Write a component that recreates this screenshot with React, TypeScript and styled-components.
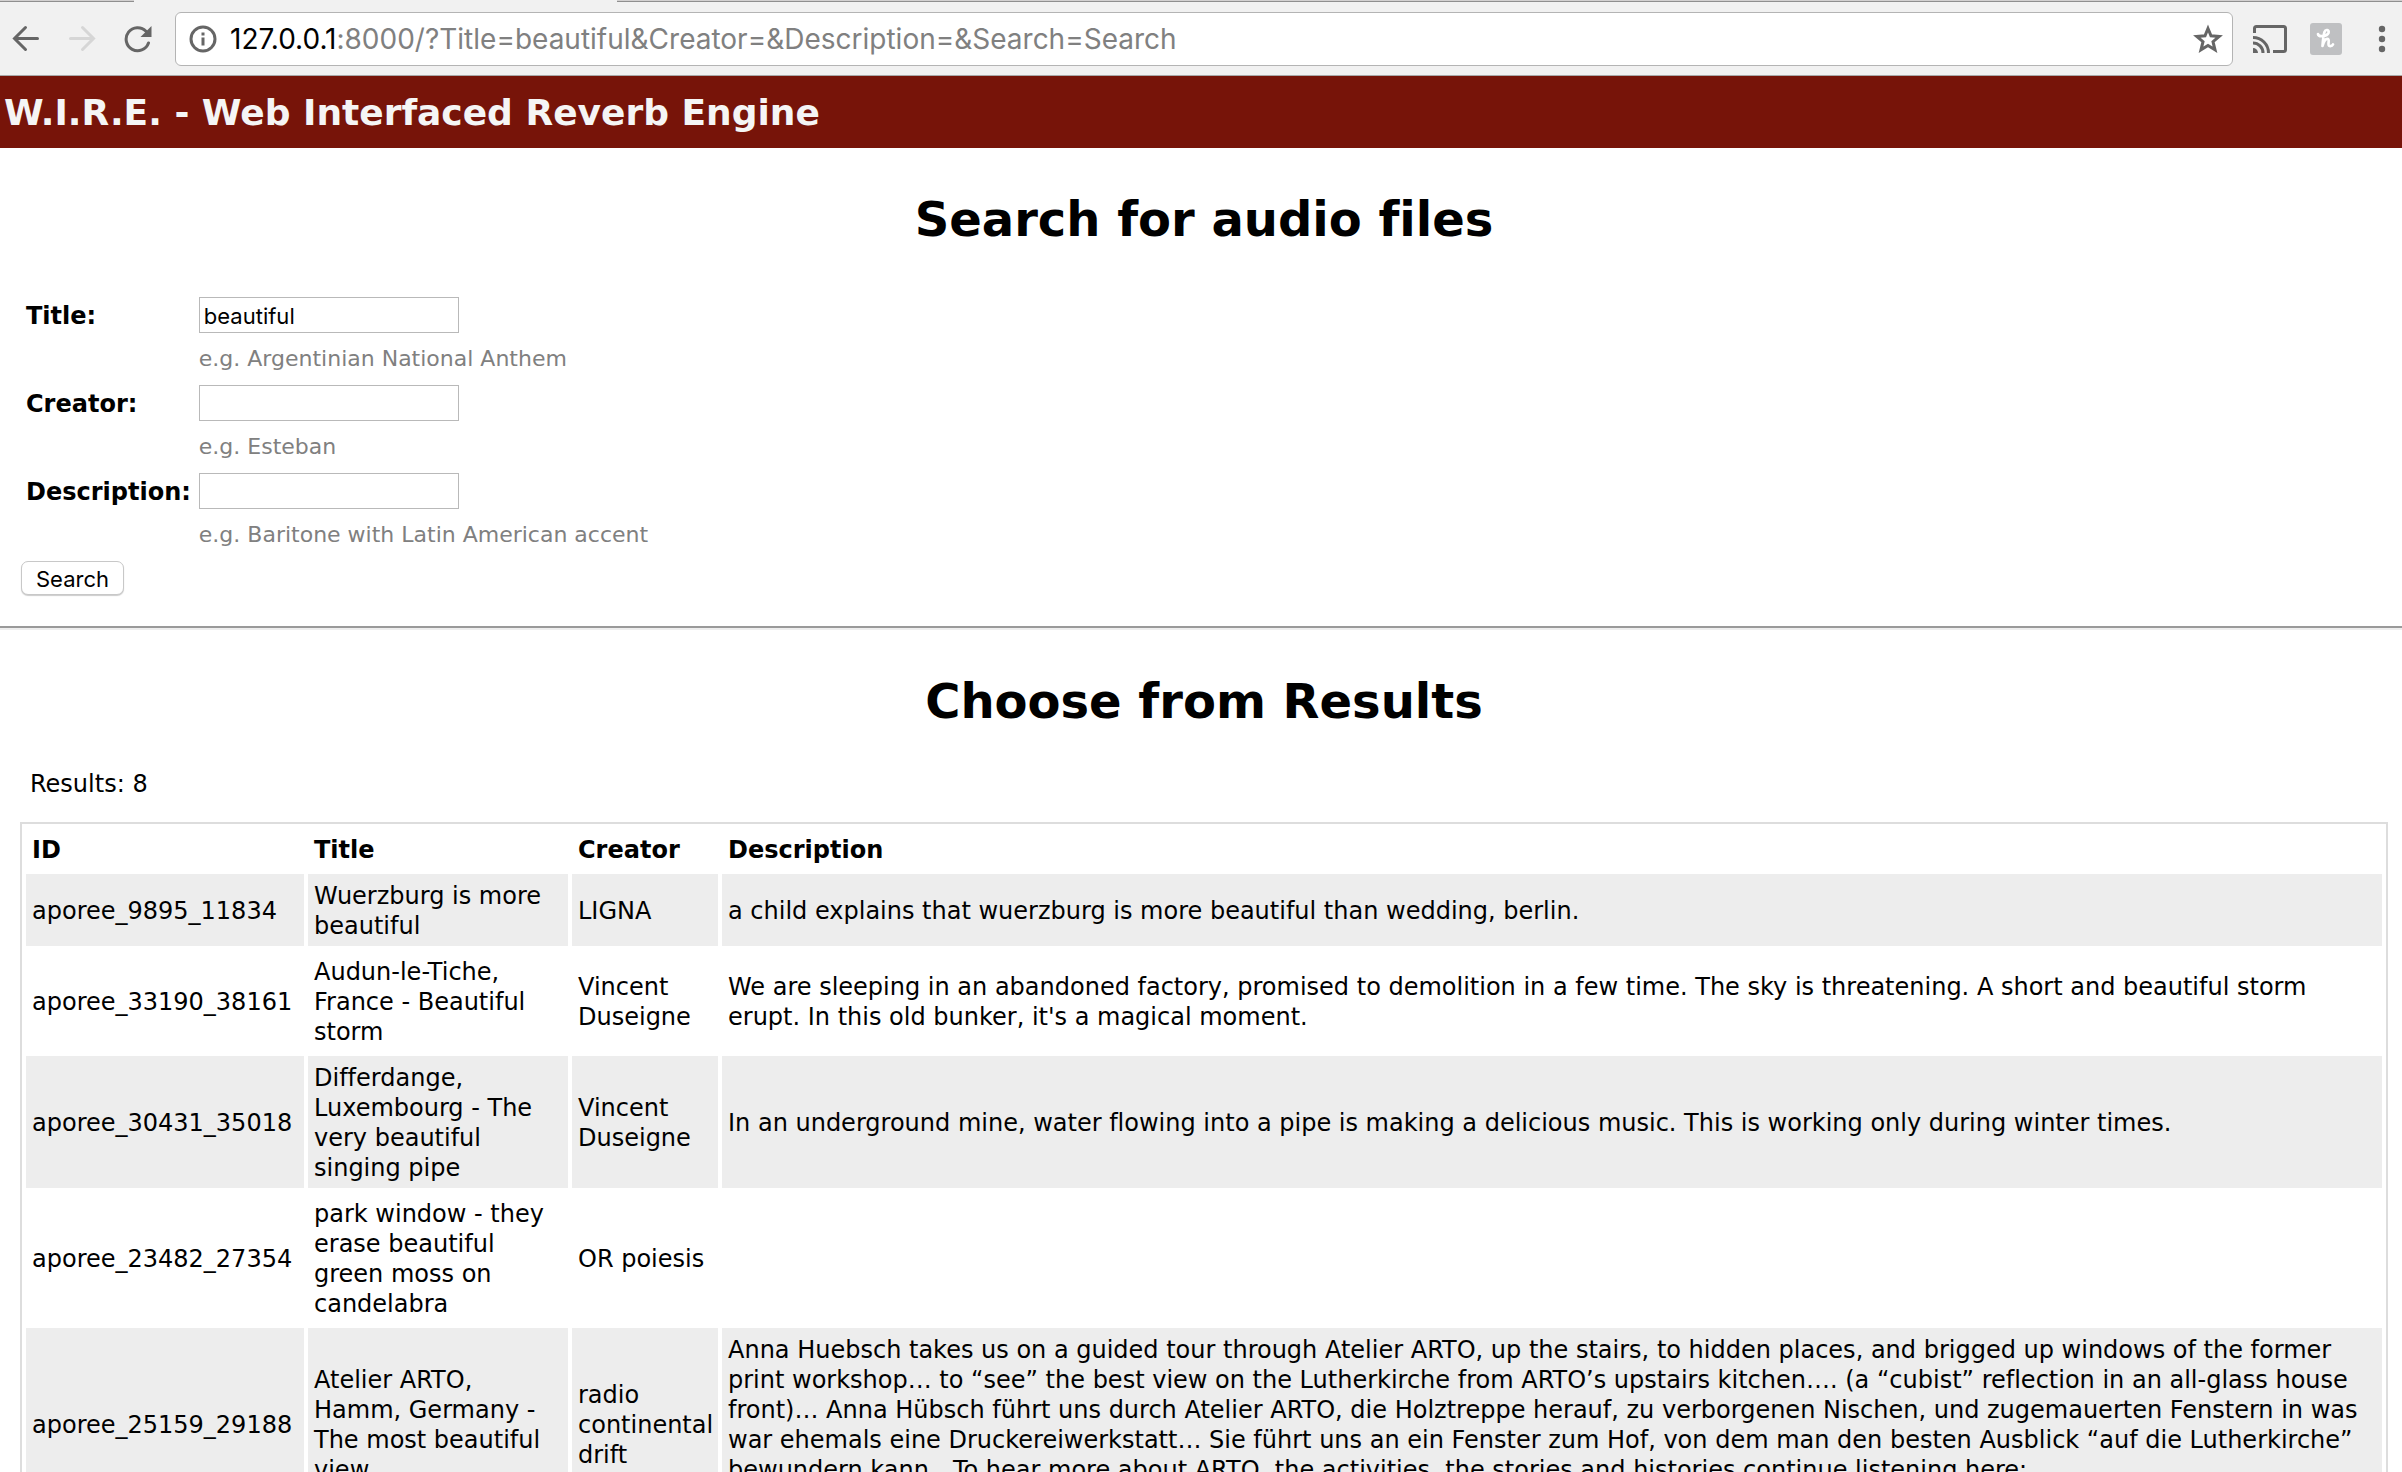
import React from "react";
import styled, { createGlobalStyle } from "styled-components";

const GlobalStyle = createGlobalStyle`
  *, *::before, *::after { box-sizing: border-box; }
  body {
    margin: 0;
    background: #fff;
    color: #000;
    font-family: Verdana, "DejaVu Sans", sans-serif;
    font-size: 24px;
    line-height: 30px;
    font-variant-ligatures: none;
  }
`;

const uiFont = `Inter, Roboto, sans-serif`;

const Window = styled.div`
  display: flex;
  flex-direction: column;
  height: 100vh;
  overflow: hidden;
`;

const TabStrip = styled.div`
  display: flex;
  height: 2px;
  flex: none;
  background: #f1f1f1;
`;

const TabEdge = styled.div<{ $grow?: boolean }>`
  height: 2px;
  width: 134px;
  flex: ${(p) => (p.$grow ? "1" : "none")};
  background: #d2d0d0;
  border-bottom: 1px solid #8f8f8f;
`;

const TabGap = styled.div`
  width: 483px;
  flex: none;
`;

const Toolbar = styled.header`
  display: flex;
  align-items: center;
  flex: none;
  height: 74px;
  padding: 0 2px 0 8px;
  background: #f1f1f1;
  border-bottom: 1px solid #a9a9a9;
`;

const IconButton = styled.button<{ $dim?: boolean }>`
  display: flex;
  align-items: center;
  justify-content: center;
  flex: none;
  width: 36px;
  height: 36px;
  padding: 0;
  border: 0;
  background: none;
  color: ${(p) => (p.$dim ? "#d6d6d6" : "#666")};
  svg { display: block; }
`;

const Navigation = styled.nav`
  display: flex;
  gap: 20px;
  margin-right: 19px;
`;

const AddressBar = styled.div`
  display: flex;
  align-items: center;
  flex: 1;
  height: 54px;
  padding: 0 6px 0 9px;
  background: #fff;
  border: 1px solid #b4b4b4;
  border-radius: 6px;
`;

const Url = styled.span`
  flex: 1;
  padding: 1px 0 0 9px;
  font-family: ${uiFont};
  font-size: 28px;
  line-height: 34px;
  color: #808080;
  white-space: nowrap;
`;

const Host = styled.span`
  color: #000;
`;

const Extensions = styled.div`
  display: flex;
  align-items: center;
  gap: 20px;
  margin-left: 19px;
`;

const Page = styled.div`
  flex: 1;
  overflow: hidden;
`;

const Banner = styled.div`
  padding: 15px 4px 13px;
  background: #771409;
  color: #f5f5f5;
  font-size: 36px;
  line-height: 44px;
  font-weight: bold;
`;

const Section = styled.section`
  padding: 0 14px 0 20px;
`;

const Heading = styled.h1`
  margin: 0;
  padding-top: 41px;
  font-size: 48px;
  line-height: 60px;
  text-align: center;
`;

const Form = styled.form`
  padding: 48px 1px 31px;
`;

const Fields = styled.div`
  display: grid;
  grid-template-columns: max-content 1fr;
  column-gap: 8px;
  padding-left: 5px;
`;

const Label = styled.label`
  padding-top: 4px;
  font-weight: bold;
`;

const Field = styled.div`
  display: flex;
  flex-direction: column;
  align-items: flex-start;
  height: 88px;
`;

const TextInput = styled.input`
  width: 260px;
  height: 36px;
  padding: 2px 4px 0;
  border: 1px solid #b9b9b9;
  border-radius: 0;
  background: #fff;
  color: #000;
  font-family: ${uiFont};
  font-size: 22px;
`;

const Hint = styled.span`
  padding-top: 11px;
  font-size: 22px;
  line-height: 30px;
  color: #808080;
`;

const SubmitButton = styled.button`
  display: block;
  height: 34px;
  padding: 1px 14px 0;
  border: 1px solid #c8c8c8;
  border-radius: 7px;
  background: #fff;
  box-shadow: 0 1px 1px rgba(0, 0, 0, 0.2);
  color: #000;
  font-family: ${uiFont};
  font-size: 22px;
  line-height: 30px;
`;

const Divider = styled.hr`
  height: 4px;
  margin: 0;
  border: 0;
  border-top: 2px solid #9a9a9a;
  border-bottom: 2px solid #eee;
`;

const ResultCount = styled.p`
  margin: 0;
  padding: 38px 10px 23px;
`;

const Table = styled.table`
  width: 100%;
  table-layout: fixed;
  border: 2px solid #ddd;
  border-collapse: separate;
  border-spacing: 4px;
  font-size: 24px;
`;

const Column = styled.col<{ $width?: number }>`
  width: ${(p) => (p.$width ? `${p.$width}px` : "auto")};
`;

const HeaderCell = styled.th`
  padding: 7px 6px 5px;
  text-align: left;
`;

const Row = styled.tr`
  &:nth-child(odd) td { background: #ededed; }
`;

const Cell = styled.td<{ $top?: boolean }>`
  padding: 7px 6px 5px;
  vertical-align: ${(p) => (p.$top ? "top" : "middle")};
  height: ${(p) => (p.$top ? "192px" : "auto")};
`;

const fields = [
  { id: "title", label: "Title:", value: "beautiful", hint: "e.g. Argentinian National Anthem" },
  { id: "creator", label: "Creator:", value: "", hint: "e.g. Esteban" },
  { id: "description", label: "Description:", value: "", hint: "e.g. Baritone with Latin American accent" },
];

type Result = { id: string; title: string; creator: string; description: string; long?: boolean };

const results: Result[] = [
  {
    id: "aporee_9895_11834",
    title: "Wuerzburg is more beautiful",
    creator: "LIGNA",
    description: "a child explains that wuerzburg is more beautiful than wedding, berlin.",
  },
  {
    id: "aporee_33190_38161",
    title: "Audun-le-Tiche, France - Beautiful storm",
    creator: "Vincent Duseigne",
    description:
      "We are sleeping in an abandoned factory, promised to demolition in a few time. The sky is threatening. A short and beautiful storm erupt. In this old bunker, it's a magical moment.",
  },
  {
    id: "aporee_30431_35018",
    title: "Differdange, Luxembourg - The very beautiful singing pipe",
    creator: "Vincent Duseigne",
    description:
      "In an underground mine, water flowing into a pipe is making a delicious music. This is working only during winter times.",
  },
  {
    id: "aporee_23482_27354",
    title: "park window - they erase beautiful green moss on candelabra",
    creator: "OR poiesis",
    description: "",
  },
  {
    id: "aporee_25159_29188",
    title: "Atelier ARTO, Hamm, Germany - The most beautiful view",
    creator: "radio continental drift",
    description:
      "Anna Huebsch takes us on a guided tour through Atelier ARTO, up the stairs, to hidden places, and brigged up windows of the former print workshop… to “see” the best view on the Lutherkirche from ARTO’s upstairs kitchen…. (a “cubist” reflection in an all-glass house front)… Anna Hübsch führt uns durch Atelier ARTO, die Holztreppe herauf, zu verborgenen Nischen, und zugemauerten Fenstern in was war ehemals eine Druckereiwerkstatt… Sie führt uns an ein Fenster zum Hof, von dem man den besten Ausblick “auf die Lutherkirche” bewundern kann…To hear more about ARTO, the activities, the stories and histories continue listening here:",
    long: true,
  },
];

const BackIcon = () => (
  <svg width="28" height="28" viewBox="0 0 28 28" fill="none" stroke="currentColor" strokeWidth="3" strokeLinecap="round">
    <path d="M25.500 13.500H3M13.500 2.500L2.500 13.500L13.500 24.500" />
  </svg>
);

const ForwardIcon = () => (
  <svg width="28" height="28" viewBox="0 0 28 28" fill="none" stroke="currentColor" strokeWidth="3" strokeLinecap="round">
    <path d="M2.500 13.500H25M14.500 2.500L25.500 13.500L14.500 24.500" />
  </svg>
);

const ReloadIcon = () => (
  <svg width="28" height="28" viewBox="0 0 28 28">
    <path
      d="M24.500 18A11.500 11.500 0 1 1 22 6.300"
      fill="none"
      stroke="currentColor"
      strokeWidth="3"
      strokeLinecap="round"
    />
    <path d="M27.500 1V12H16.500Z" fill="currentColor" />
  </svg>
);

const InfoIcon = () => (
  <svg width="28" height="28" viewBox="0 0 28 28">
    <circle cx="14" cy="14" r="12" fill="none" stroke="currentColor" strokeWidth="3" />
    <path d="M12.500 12.500h3v8h-3zM12.500 7.500h3v3h-3z" fill="currentColor" />
  </svg>
);

const StarIcon = () => (
  <svg width="30" height="30" viewBox="0 0 30 30" fill="none" stroke="currentColor" strokeWidth="3">
    <path d="M15 4.500L18 11.800L26.200 12.400L20 17.700L22 25.800L15 21.400L8 25.800L10 17.700L3.800 12.400L12 11.800Z" />
  </svg>
);

const CastIcon = () => (
  <svg width="36" height="30" viewBox="0 0 36 30" fill="none" stroke="currentColor" strokeWidth="3">
    <path d="M2.500 9V4.500Q2.500 2.500 4.500 2.500H31.500Q33.500 2.500 33.500 4.500V25.500Q33.500 27.500 31.500 27.500H21" />
    <path d="M1 13.500A15.500 15.500 0 0 1 16.500 29M1 19A10 10 0 0 1 11 29" />
    <path d="M1 24A5 5 0 0 1 6 29H1Z" fill="currentColor" stroke="none" />
  </svg>
);

const HoneyIcon = () => (
  <svg width="32" height="32" viewBox="0 0 32 32" fill="none">
    <rect width="32" height="32" rx="3" fill="#bfc0c2" />
    <path
      d="M8 11C8.500 14.500 17 13.500 18.500 10C19.500 6.500 15.500 6 14.500 9C13.500 12 13 17 12.500 23C13.500 18.500 16 15 18 16C20 17 17 22.500 19.500 23C21.500 23.300 22.500 22.500 23 21.500"
      stroke="#fff"
      strokeWidth="2.700"
      strokeLinecap="round"
      strokeLinejoin="round"
    />
  </svg>
);

const MenuIcon = () => (
  <svg width="8" height="28" viewBox="0 0 8 28" fill="currentColor">
    <circle cx="4" cy="4" r="3.200" />
    <circle cx="4" cy="14" r="3.200" />
    <circle cx="4" cy="24" r="3.200" />
  </svg>
);

export default function App() {
  return (
    <Window>
      <GlobalStyle />
      <TabStrip>
        <TabEdge />
        <TabGap />
        <TabEdge $grow />
      </TabStrip>
      <Toolbar>
        <Navigation>
          <IconButton aria-label="Back"><BackIcon /></IconButton>
          <IconButton aria-label="Forward" $dim><ForwardIcon /></IconButton>
          <IconButton aria-label="Reload"><ReloadIcon /></IconButton>
        </Navigation>
        <AddressBar>
          <IconButton aria-label="Site information"><InfoIcon /></IconButton>
          <Url>
            <Host>127.0.0.1</Host>:8000/?Title=beautiful&amp;Creator=&amp;Description=&amp;Search=Search
          </Url>
          <IconButton aria-label="Bookmark this page"><StarIcon /></IconButton>
        </AddressBar>
        <Extensions>
          <IconButton aria-label="Cast"><CastIcon /></IconButton>
          <IconButton aria-label="Honey"><HoneyIcon /></IconButton>
          <IconButton aria-label="Menu"><MenuIcon /></IconButton>
        </Extensions>
      </Toolbar>
      <Page>
        <Banner>W.I.R.E. - Web Interfaced Reverb Engine</Banner>
        <Section>
          <Heading>Search for audio files</Heading>
          <Form onSubmit={(e) => e.preventDefault()}>
            <Fields>
              {fields.map((f) => (
                <React.Fragment key={f.id}>
                  <Label htmlFor={f.id}>{f.label}</Label>
                  <Field>
                    <TextInput id={f.id} type="text" defaultValue={f.value} />
                    <Hint>{f.hint}</Hint>
                  </Field>
                </React.Fragment>
              ))}
            </Fields>
            <SubmitButton type="submit">Search</SubmitButton>
          </Form>
        </Section>
        <Divider />
        <Section>
          <Heading as="h2">Choose from Results</Heading>
          <ResultCount>Results: 8</ResultCount>
          <Table>
            <colgroup>
              <Column $width={278} />
              <Column $width={260} />
              <Column $width={146} />
              <Column />
            </colgroup>
            <thead>
              <tr>
                <HeaderCell>ID</HeaderCell>
                <HeaderCell>Title</HeaderCell>
                <HeaderCell>Creator</HeaderCell>
                <HeaderCell>Description</HeaderCell>
              </tr>
            </thead>
            <tbody>
              {results.map((r) => (
                <Row key={r.id}>
                  <Cell>{r.id}</Cell>
                  <Cell>{r.title}</Cell>
                  <Cell>{r.creator}</Cell>
                  <Cell $top={r.long}>{r.description}</Cell>
                </Row>
              ))}
            </tbody>
          </Table>
        </Section>
      </Page>
    </Window>
  );
}
